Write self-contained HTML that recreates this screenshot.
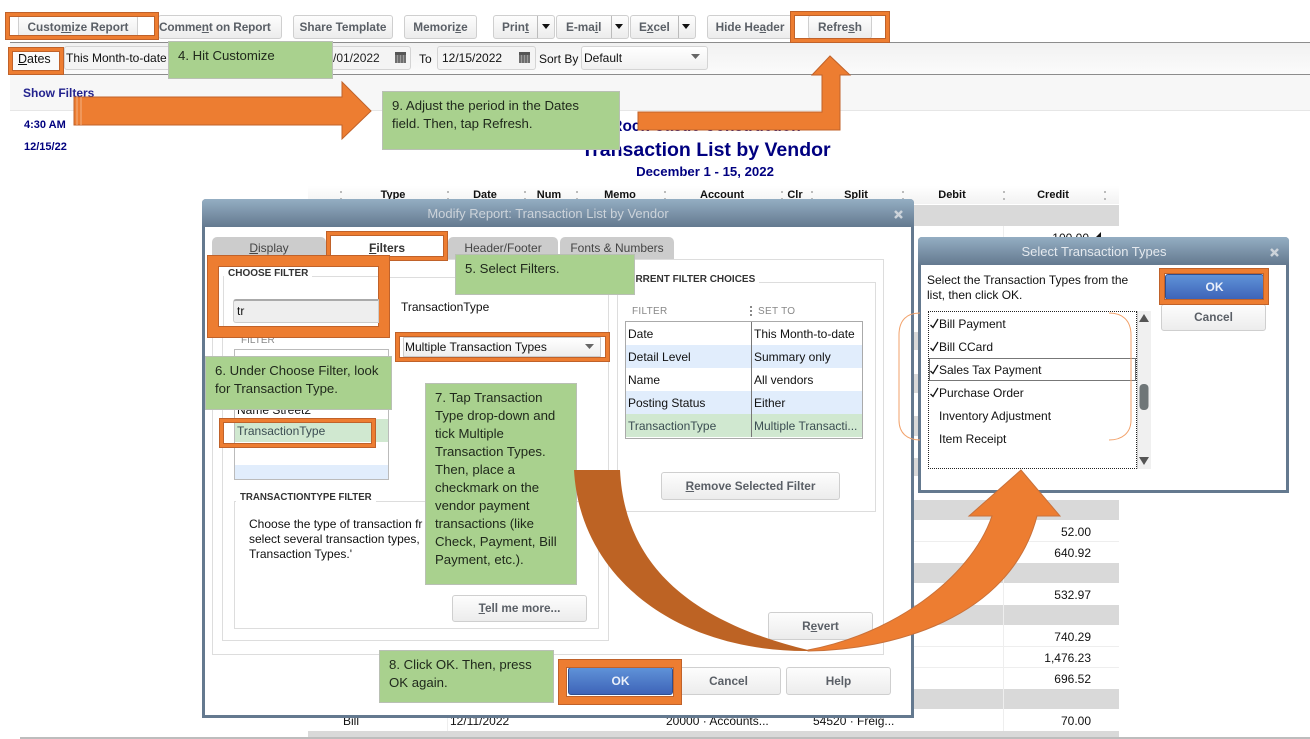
<!DOCTYPE html>
<html><head><meta charset="utf-8">
<style>
html,body{margin:0;padding:0;background:#fff}
#p{position:relative;width:1310px;height:739px;overflow:hidden;background:#fff;font:12px/14px "Liberation Sans",sans-serif;color:#111}
#p div,#p svg{position:absolute;box-sizing:border-box}
.b{background:linear-gradient(#fdfdfd,#ececec);border:1px solid #cfcfcf;border-radius:3px;text-align:center;font-weight:bold;font-size:11.8px;color:#5a5f66;white-space:nowrap}
.g{background:#a9d18e;border:1px solid #b9c0b4;color:#20291c;font-size:13.2px;line-height:18px;white-space:nowrap;padding:5px 9px}
.f{border:3px solid #ed7d31;box-shadow:0 0 0 1px #c0622a,inset 0 0 0 1px #c0622a}
.t{white-space:nowrap}
.gr{background:#d9d9d9;height:20px;left:308px;width:811px}
.n{left:1003px;width:88px;text-align:right;white-space:nowrap}
.h{top:188px;font-weight:bold;font-size:11px;white-space:nowrap;color:#111;text-align:center}
.c{top:191px;width:2px;height:9px;border-top:2px solid #bbb;border-bottom:2px solid #bbb}
.l{background:#fff;border:1px solid #ddd}
.tab{background:#ccc;border-radius:5px 5px 0 0;text-align:center;color:#444;line-height:22px}
.cap{font-size:10px;font-weight:bold;background:#fff;color:#333;white-space:nowrap;padding:0 4px;line-height:11px}
.blue{background:linear-gradient(#5f92d8,#3e64b8);border:1px solid #2f4f90;border-radius:3px;color:#eaf0fa;font-weight:bold;text-align:center;box-shadow:0 0 0 1px #fff}
.tr{left:626px;width:236px;height:23px;line-height:24px}
.tr span{position:absolute;white-space:nowrap}
.lt{left:939px;white-space:nowrap;color:#111}
.cal{width:11px;height:11px;border-top:3px solid #555;background:repeating-linear-gradient(90deg,#6e6e6e 0 2px,#9a9a9a 2px 3px)}
</style></head><body><div id="p">

<!-- toolbar -->
<div class="b" style="left:18px;top:15px;width:120px;height:24px;line-height:23px">Custo<u>m</u>ize Report</div>
<div class="b" style="left:158px;top:15px;width:124px;height:24px;line-height:23px;text-align:left;padding-left:0;letter-spacing:-.1px">Comme<u>n</u>t on Report</div>
<div class="b" style="left:293px;top:15px;width:100px;height:24px;line-height:23px">Share Template</div>
<div class="b" style="left:404px;top:15px;width:73px;height:24px;line-height:23px">Memori<u>z</u>e</div>
<div class="b" style="left:493px;top:15px;width:62px;height:24px;line-height:23px;text-align:left;padding-left:8px">Prin<u>t</u></div>
<div class="b" style="left:556px;top:15px;width:73px;height:24px;line-height:23px;text-align:left;padding-left:9px">E-ma<u>i</u>l</div>
<div class="b" style="left:630px;top:15px;width:66px;height:24px;line-height:23px;text-align:left;padding-left:8px">E<u>x</u>cel</div>
<div style="left:537px;top:16px;width:1px;height:22px;background:#bbb"></div>
<div style="left:611px;top:16px;width:1px;height:22px;background:#bbb"></div>
<div style="left:678px;top:16px;width:1px;height:22px;background:#bbb"></div>
<svg style="left:0;top:0" width="720" height="40"><path d="M542 24h8l-4 5zM615 24h8l-4 5zM682 24h8l-4 5z" fill="#111"/></svg>
<div class="b" style="left:707px;top:15px;width:86px;height:24px;line-height:23px">Hide He<u>a</u>der</div>
<div class="b" style="left:808px;top:15px;width:64px;height:24px;line-height:23px">Refre<u>s</u>h</div>

<!-- date bar -->
<div style="left:10px;top:42px;width:1300px;height:33px;background:linear-gradient(#f1f1f1,#fbfbfb);border-top:1px solid #8c8c8c;border-bottom:1px solid #8c8c8c"></div>
<div style="left:12px;top:51px;width:48px;height:20px;background:#fafafa"></div>
<div class="t" style="left:18px;top:52px;font-size:12.5px"><u>D</u>ates</div>
<div style="left:64px;top:46px;width:347px;height:24px;background:#f4f4f4;border:1px solid #d4d4d4;border-radius:3px"></div>
<div class="t" style="left:66px;top:51px">This Month-to-date</div>
<div class="t" style="left:333px;top:51px;color:#222">/01/2022</div>
<div class="cal" style="left:395px;top:52px"></div>
<div class="t" style="left:419px;top:52px">To</div>
<div style="left:437px;top:46px;width:99px;height:24px;background:#f4f4f4;border:1px solid #d4d4d4;border-radius:3px"></div>
<div class="t" style="left:442px;top:51px">12/15/2022</div>
<div class="cal" style="left:519px;top:52px"></div>
<div class="t" style="left:539px;top:52px">Sort By</div>
<div style="left:581px;top:46px;width:127px;height:24px;background:linear-gradient(#fff,#f0f0f0);border:1px solid #d4d4d4;border-radius:3px"></div>
<div class="t" style="left:584px;top:51px">Default</div>
<svg style="left:690px;top:53px" width="12" height="8"><path d="M1 1h9l-4.500 5z" fill="#666"/></svg>

<!-- filter row -->
<div style="left:10px;top:75px;width:1300px;height:36px;background:#f7f7f7;border-bottom:1px solid #e6e6e6"></div>
<div class="t" style="left:23px;top:86px;font-weight:bold;color:#23238e">Show Filters</div>
<div class="t" style="left:24px;top:118px;font-weight:bold;font-size:11px;color:#00007f">4:30 AM</div>
<div class="t" style="left:24px;top:140px;font-weight:bold;font-size:11px;color:#00007f">12/15/22</div>

<!-- report title -->
<div class="t" style="left:506px;width:400px;top:119px;text-align:center;font-weight:bold;font-size:15.500px;line-height:16px;color:#000080">Rock Castle Construction</div>
<div class="t" style="left:506px;width:400px;top:139px;text-align:center;font-weight:bold;font-size:19.500px;line-height:23px;color:#000080">Transaction List by Vendor</div>
<div class="t" style="left:506px;width:398px;top:165px;text-align:center;font-weight:bold;font-size:13.200px;color:#000080">December 1 - 15, 2022</div>

<!-- table header -->
<div style="left:308px;top:186px;width:811px;height:18px;background:linear-gradient(#fff,#f2f2f2)"></div>
<div class="h" style="left:353px;width:80px">Type</div>
<div class="h" style="left:445px;width:80px">Date</div>
<div class="h" style="left:509px;width:80px">Num</div>
<div class="h" style="left:580px;width:80px">Memo</div>
<div class="h" style="left:682px;width:80px">Account</div>
<div class="h" style="left:755px;width:80px">Clr</div>
<div class="h" style="left:816px;width:80px">Split</div>
<div class="h" style="left:912px;width:80px">Debit</div>
<div class="h" style="left:1013px;width:80px">Credit</div>
<div class="c" style="left:340px"></div><div class="c" style="left:447px"></div><div class="c" style="left:524px"></div><div class="c" style="left:576px"></div><div class="c" style="left:664px"></div><div class="c" style="left:781px"></div><div class="c" style="left:811px"></div><div class="c" style="left:902px"></div><div class="c" style="left:1003px"></div><div class="c" style="left:1104px"></div>

<!-- table rows -->
<div class="gr" style="top:205px;height:21px"></div>
<div class="gr" style="top:332px;height:18px"></div>
<div class="gr" style="top:374px;height:19px"></div>
<div class="gr" style="top:416px;height:20px"></div>
<div class="gr" style="top:458px;height:18px"></div>
<div class="gr" style="top:500px"></div>
<div class="gr" style="top:563px"></div>
<div class="gr" style="top:605px"></div>
<div class="gr" style="top:689px"></div>
<div class="gr" style="top:731px;height:6px"></div>
<div style="left:1003px;top:226px;width:1px;height:505px;background:#eee"></div>
<div style="left:914px;top:541px;width:205px;height:1px;background:#eee"></div>
<div style="left:914px;top:646px;width:205px;height:1px;background:#eee"></div>
<div style="left:914px;top:667px;width:205px;height:1px;background:#eee"></div>
<div class="n" style="top:231px;width:86px">100.00</div>
<svg style="left:1095px;top:231px" width="8" height="7"><path d="M6 1V6H1z" fill="#111"/></svg>
<div class="n" style="top:525px">52.00</div>
<div class="n" style="top:546px">640.92</div>
<div class="n" style="top:588px">532.97</div>
<div class="n" style="top:630px">740.29</div>
<div class="n" style="top:651px">1,476.23</div>
<div class="n" style="top:672px">696.52</div>
<div class="n" style="top:714px">70.00</div>
<div class="t" style="left:343px;top:714px">Bill</div>
<div class="t" style="left:450px;top:714px">12/11/2022</div>
<div class="t" style="left:666px;top:714px">20000 · Accounts...</div>
<div class="t" style="left:813px;top:714px">54520 · Freig...</div>
<div style="left:447px;top:717px;width:1px;height:14px;background:#eee"></div>
<div style="left:20px;top:737px;width:1290px;height:2px;background:#bdbdbd"></div>

<!-- dialog 1 -->
<div style="left:202px;top:199px;width:712px;height:519px;background:#fff;border:3px solid #64798f;border-top:0;border-radius:4px 4px 0 0"></div>
<div style="left:202px;top:199px;width:712px;height:28px;background:linear-gradient(#94aec3,#64798f);border-radius:4px 4px 0 0"></div>
<div class="t" style="left:202px;width:692px;top:207px;text-align:center;color:#ccd3da;font-size:13px">Modify Report: Transaction List by Vendor</div>
<svg style="left:893px;top:209px" width="11" height="11"><path d="M2 2l7 7M9 2l-7 7" stroke="#ccd3da" stroke-width="2.500"/></svg>
<div class="tab" style="left:212px;top:237px;width:114px;height:23px"><u>D</u>isplay</div>
<div class="tab" style="left:448px;top:237px;width:110px;height:23px">Header/Footer</div>
<div class="tab" style="left:560px;top:237px;width:114px;height:23px">Fonts &amp; Numbers</div>
<div class="l" style="left:212px;top:259px;width:672px;height:396px"></div>
<div style="left:331px;top:236px;width:112px;height:26px;background:#fff;text-align:center;font-weight:bold;line-height:24px;color:#333"><u>F</u>ilters</div>
<div class="l" style="left:222px;top:277px;width:387px;height:364px"></div>
<div class="l" style="left:617px;top:282px;width:259px;height:230px"></div>
<div class="cap" style="left:617px;top:274px">CURRENT FILTER CHOICES</div>
<div class="t" style="left:401px;top:300px">TransactionType</div>
<div style="left:403px;top:337px;width:198px;height:20px;background:linear-gradient(#fff,#eee);border:1px solid #ccc"></div>
<div class="t" style="left:405px;top:340px">Multiple Transaction Types</div>
<svg style="left:584px;top:343px" width="12" height="8"><path d="M1 1h9l-4.500 5z" fill="#666"/></svg>
<div class="t" style="left:241px;top:334px;font-size:10px;color:#888">FILTER</div>
<div style="left:234px;top:349px;width:155px;height:131px;background:#fff;border:1px solid #bbb"></div>
<div style="left:235px;top:419px;width:153px;height:23px;background:#d0e8d0"></div>
<div style="left:235px;top:465px;width:153px;height:14px;background:#e1edfc"></div>
<div class="t" style="left:237px;top:403px">Name Street2</div>
<div class="t" style="left:237px;top:424px;color:#3b4d52">TransactionType</div>

<div class="l" style="left:234px;top:501px;width:365px;height:128px"></div>
<div class="cap" style="left:236px;top:492px;font-size:9.700px">TRANSACTIONTYPE FILTER</div>
<div class="t" style="left:249px;top:517px;line-height:15px">Choose the type of transaction fr<br>select several transaction types,<br>Transaction Types.'</div>
<div class="b" style="left:452px;top:595px;width:135px;height:27px;line-height:25px"><u>T</u>ell me more...</div>

<div class="t" style="left:632px;top:305px;font-size:10px;color:#888;letter-spacing:.3px">FILTER</div>
<div class="t" style="left:758px;top:305px;font-size:10px;color:#888;letter-spacing:.3px">SET TO</div>
<div style="left:750px;top:306px;height:10px;width:2px;border-left:2px dotted #888"></div>
<div style="left:625px;top:321px;width:238px;height:118px;background:#fff;border:1px solid #aaa"></div>
<div class="tr" style="top:322px"><span style="left:2px">Date</span><span style="left:128px">This Month-to-date</span></div>
<div class="tr" style="top:345px;background:#e1edfc"><span style="left:2px">Detail Level</span><span style="left:128px">Summary only</span></div>
<div class="tr" style="top:368px"><span style="left:2px">Name</span><span style="left:128px">All vendors</span></div>
<div class="tr" style="top:391px;background:#e1edfc"><span style="left:2px">Posting Status</span><span style="left:128px">Either</span></div>
<div class="tr" style="top:414px;background:#d0e8d0;color:#3b4d52"><span style="left:2px">TransactionType</span><span style="left:128px">Multiple Transacti...</span></div>
<div style="left:751px;top:322px;width:1px;height:115px;background:#777"></div>
<div class="b" style="left:661px;top:472px;width:179px;height:28px;line-height:26px"><u>R</u>emove Selected Filter</div>
<div class="b" style="left:768px;top:612px;width:105px;height:28px;line-height:26px">R<u>e</u>vert</div>
<div class="b" style="left:676px;top:667px;width:105px;height:28px;line-height:26px">Cancel</div>
<div class="b" style="left:786px;top:667px;width:105px;height:28px;line-height:26px">Help</div>
<div class="blue" style="left:568px;top:667px;width:105px;height:28px;line-height:26px">OK</div>

<!-- dialog 2 -->
<div style="left:918px;top:237px;width:371px;height:256px;background:#fff;border:3px solid #64798f;border-top:0;border-radius:4px 4px 0 0"></div>
<div style="left:918px;top:237px;width:371px;height:28px;background:linear-gradient(#94aec3,#64798f);border-radius:4px 4px 0 0"></div>
<div class="t" style="left:918px;width:352px;top:245px;text-align:center;color:#e4e9ee;font-size:13px">Select Transaction Types</div>
<svg style="left:1269px;top:247px" width="11" height="11"><path d="M2 2l7 7M9 2l-7 7" stroke="#ccd3da" stroke-width="2.500"/></svg>
<div class="t" style="left:927px;top:273px;line-height:15px">Select the Transaction Types from the<br>list, then click OK.</div>
<div style="left:928px;top:311px;width:209px;height:158px;border:1px dotted #222"></div>
<div style="left:1137px;top:311px;width:14px;height:158px;background:#f0f0f0;border-left:1px solid #ccc"></div>
<svg style="left:1137px;top:311px" width="14" height="158"><path d="M2 11h10l-5-8zM2 146h10l-5 8z" fill="#555"/><rect x="2.500" y="73" width="9" height="26" rx="4" fill="#6f7678"/></svg>
<div style="left:929px;top:358px;width:207px;height:23px;border:1px solid #777"></div>
<svg style="left:0;top:0" width="1310" height="739"><path d="M930.500 325L933 327.500L938 319M930.500 348L933 350.500L938 342M930.500 371L933 373.500L938 365M930.500 394L933 396.500L938 388" fill="none" stroke="#111" stroke-width="1.300"/></svg>
<div class="lt" style="top:317px">Bill Payment</div>
<div class="lt" style="top:340px">Bill CCard</div>
<div class="lt" style="top:363px">Sales Tax Payment</div>
<div class="lt" style="top:386px">Purchase Order</div>
<div class="lt" style="top:409px">Inventory Adjustment</div>
<div class="lt" style="top:432px">Item Receipt</div>
<div class="b" style="left:1161px;top:304px;width:105px;height:27px;line-height:25px">Cancel</div>
<div class="blue" style="left:1165px;top:274px;width:99px;height:26px;line-height:24px">OK</div>

<!-- annotations -->
<div class="f" style="left:6px;top:13px;width:152px;height:26px"></div>
<div class="f" style="left:791px;top:12px;width:98px;height:30px"></div>
<div class="f" style="left:9px;top:48px;width:54px;height:26px"></div>
<div class="f" style="left:327px;top:232px;width:120px;height:28px"></div>
<div class="f" style="left:396px;top:333px;width:213px;height:28px"></div>
<div class="f" style="left:220px;top:419px;width:155px;height:28px"></div>
<div class="f" style="left:559px;top:660px;width:122px;height:44px;border-width:7px"></div>
<div class="f" style="left:1160px;top:269px;width:108px;height:35px;border-width:4px"></div>

<div style="left:207px;top:255px;width:183px;height:83px;background:#ed7d31;border:1px solid #c0622a"></div>
<div style="left:218px;top:266px;width:161px;height:61px;background:#fff;border:1px solid #c0622a"></div>
<div style="left:223px;top:276px;width:155px;height:50px;border-top:1px solid #ddd;border-left:1px solid #ddd"></div>
<div class="cap" style="left:224px;top:268px">CHOOSE FILTER</div>
<div style="left:233px;top:299px;width:146px;height:24px;background:#eee;border:1px solid #ccc;border-top:2px solid #aaa;border-radius:3px 0 0 3px"></div>
<div class="t" style="left:237px;top:304px">tr</div>

<div class="g" style="left:168px;top:41px;width:165px;height:38px">4. Hit Customize</div>
<div class="g" style="left:382px;top:91px;width:238px;height:59px">9. Adjust the period in the Dates<br>field. Then, tap Refresh.</div>
<div class="g" style="left:455px;top:254px;width:180px;height:41px">5. Select Filters.</div>
<div class="g" style="left:205px;top:356px;width:187px;height:54px">6. Under Choose Filter, look<br>for Transaction Type.</div>
<div class="g" style="left:425px;top:383px;width:152px;height:202px">7. Tap Transaction<br>Type drop-down and<br>tick Multiple<br>Transaction Types.<br>Then, place a<br>checkmark on the<br>vendor payment<br>transactions (like<br>Check, Payment, Bill<br>Payment, etc.).</div>
<div class="g" style="left:379px;top:650px;width:175px;height:53px">8. Click OK. Then, press<br>OK again.</div>

<svg style="left:0;top:0" width="1310" height="739">
<path d="M74 97H342V82L371 111L342 139V125H74Z" fill="#ed7d31" stroke="#c0622a"/>
<path d="M77 97V125M81 97V125" stroke="#f4b183" fill="none"/>
<path d="M638 112H822V75H812L830 56L850 75H840V130H638Z" fill="#ed7d31" stroke="#c0622a"/>
<path d="M574 470C580 580 680 652 808 651L808 650C705 625 625 575 620 470Z" fill="#bd6324"/>
<path d="M808 651C890 650 1010 620 1037 516H1060L1021 470L969 516H992C970 580 890 635 808 650Z" fill="#ed7d31" stroke="#c9713a"/>
<path d="M920 313C907 313 899 320 899 335V420C899 433 907 440 920 440M1109 313C1122 313 1131 320 1131 335V420C1131 433 1122 440 1109 440" fill="none" stroke="#f2a26b" stroke-width="1"/>
</svg>
</div></body></html>
